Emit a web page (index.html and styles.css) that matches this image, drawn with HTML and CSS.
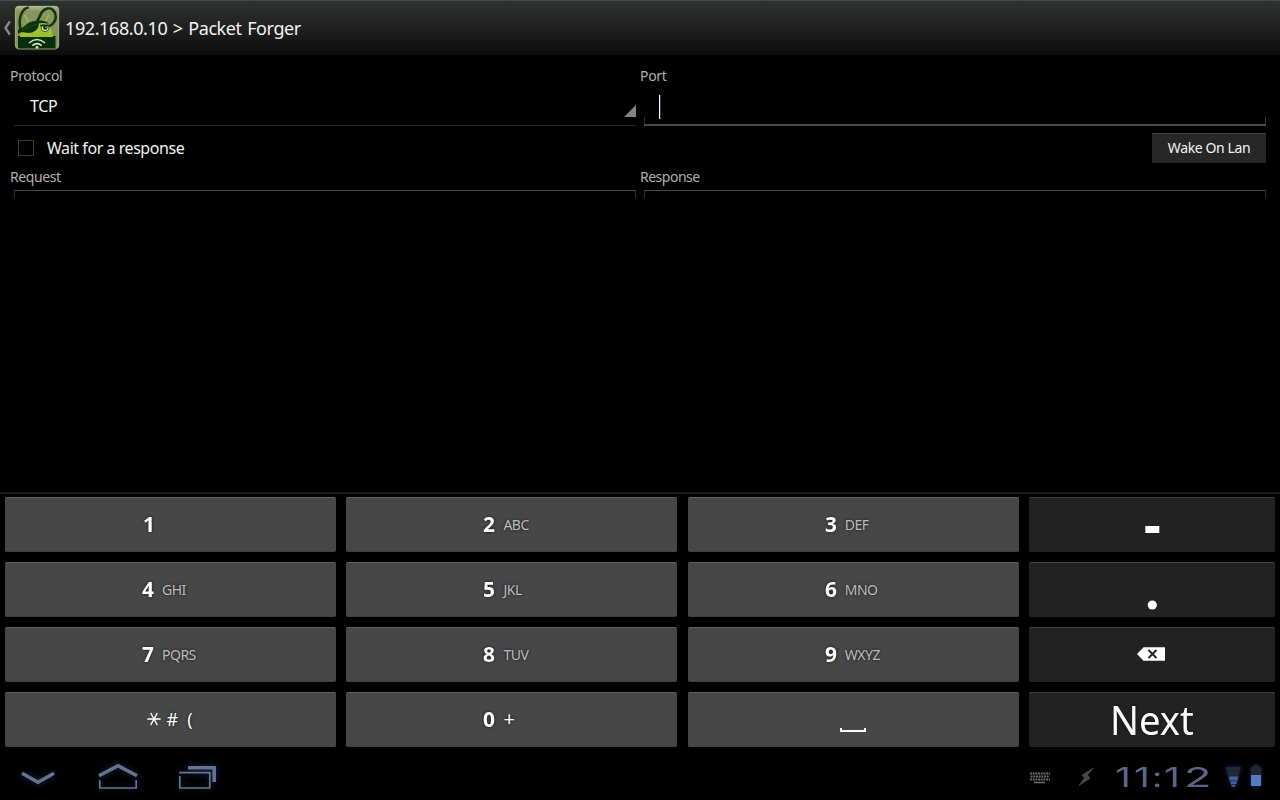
FILE: index.html
```html
<!DOCTYPE html>
<html lang="en">
<head>
<meta charset="utf-8">
<title>Packet Forger</title>
<link rel="stylesheet" href="styles.css">
</head>
<body>
<header class="bar">
  <svg class="back" width="8" height="14" viewBox="0 0 8 14"><path d="M6.800 .3 2.500 7l4.300 6.700" fill="none" stroke="#8b8b8b" stroke-width="2.400"/></svg>
  <svg class="logo" width="46" height="46" viewBox="0 0 46 46">
    <defs>
      <linearGradient id="lg" x1="0" y1="0" x2="0" y2="1"><stop offset="0" stop-color="#b7bf94"/><stop offset=".12" stop-color="#8a9662"/><stop offset="1" stop-color="#83905a"/></linearGradient>
      <linearGradient id="hd" x1="0" y1="0" x2="0" y2="1"><stop offset="0" stop-color="#a5cb35"/><stop offset="1" stop-color="#9bbf2c"/></linearGradient>
      <clipPath id="cl"><rect x="1" y="1" width="44" height="43" rx="4"/></clipPath>
    </defs>
    <rect x="1" y="1" width="44" height="43" rx="4" fill="url(#lg)"/>
    <g clip-path="url(#cl)">
      <path d="M4 31h37.500v14H4z" fill="#062f0c"/>
      <path d="M6 32C7 22 14 16.500 23 16.500S38 22 39 32z" fill="url(#hd)"/>
      <path d="m10.500 10 4 7M34.500 10l-3 7" stroke="#a4c639" stroke-width="1.300"/>
      <path d="M15 2C6 4 4 17 7 25" fill="none" stroke="#12350f" stroke-width="2.600"/>
      <path d="M4 24.500c6-1 8-7 16-8.500 5-1 10-.5 13 1l2 2c-3-1-7-1.500-10-.5 0 5-4 9.500-11 9.500-4 0-6-2-10 1z" fill="#0b330c"/>
      <path d="M8 25c5-1 9-5 16-6" fill="none" stroke="#2f4d20" stroke-width=".8"/>
      <path d="M23 16C25 14 26 10 28 7c3-4 8-5 11-2 4 4 3 9 1 12q-1.500 3-4.500 4" fill="none" stroke="#12350f" stroke-width="2.700"/>
      <circle cx="31" cy="22.800" r="3.900" fill="#d3e0a5" stroke="#3d6218" stroke-width="1"/>
      <circle cx="31.300" cy="22.500" r="2.200" fill="#0c300d"/><circle cx="32" cy="22" r=".8" fill="#dce4bd"/>
      <path d="M26 20.500l11 .3" stroke="#0c300d" stroke-width="1.600"/>
      <g fill="none" stroke="#dce4bd" stroke-width="1.600"><path d="M15 38q8-7 16 0M18.300 40.700q4.700-4 9.400 0"/></g>
      <circle cx="23" cy="42.400" r="1.400" fill="#dce4bd"/>
    </g>
    <rect x="1.500" y="1.500" width="43" height="42.500" rx="4" fill="none" stroke="#b3ba91" stroke-width="1.300" opacity=".55"/>
  </svg>
  <h1 class="title">192.168.0.10 &gt; Packet Forger</h1>
</header>
<main class="form">
  <div class="col">
    <div class="label l-protocol">Protocol</div>
    <div class="spinner"><span class="tcp">TCP</span><i class="tri"></i></div>
    <div class="row"><i class="box"></i><span class="wait">Wait for a response</span></div>
    <div class="label l-request">Request</div>
    <div class="area"></div>
  </div>
  <div class="col">
    <div class="label l-port">Port</div>
    <div class="input"><i class="caret"></i></div>
    <div class="row end"><button class="wol"><span>Wake On Lan</span></button></div>
    <div class="label l-response">Response</div>
    <div class="area"></div>
  </div>
</main>
<section class="keys">
  <div class="key"><b class="one">1</b></div>
  <div class="key"><b>2</b><span>ABC</span></div>
  <div class="key"><b>3</b><span>DEF</span></div>
  <div class="key dark"><svg width="16" height="55"><path d="M1.300 29h14v7h-14z" fill="#fff"/></svg></div>
  <div class="key"><b>4</b><span>GHI</span></div>
  <div class="key"><b>5</b><span>JKL</span></div>
  <div class="key"><b>6</b><span>MNO</span></div>
  <div class="key dark"><svg width="16" height="55"><circle cx="8.300" cy="43" r="4.600" fill="#fff"/></svg></div>
  <div class="key"><b>7</b><span>PQRS</span></div>
  <div class="key"><b>8</b><span>TUV</span></div>
  <div class="key"><b>9</b><span>WXYZ</span></div>
  <div class="key dark"><svg class="del" width="29" height="14" viewBox="0 0 29 14"><path d="M0 7 6.500.3H28v13.400H6.500z" fill="#fff"/><path d="m11.500 3 8 8m0-8-8 8" stroke="#222" stroke-width="1.900"/></svg></div>
  <div class="key sym"><svg class="star" width="14" height="14" viewBox="0 0 14 14"><path d="M.3 7h13.400M3.700 1l6.600 12M10.300 1 3.700 13" stroke="#fff" stroke-width="1.400"/></svg><span class="hash">#</span><span class="paren">(</span></div>
  <div class="key"><b>0</b><span class="plus">+</span></div>
  <div class="key"><svg class="space" width="27" height="5"><path d="M1 0v3h24V0" fill="none" stroke="#fff" stroke-width="2"/></svg></div>
  <div class="key dark"><span class="next">Next</span></div>
</section>
<footer class="nav">
  <svg class="glow" width="230" height="48" viewBox="0 752 230 48">
    <g fill="none" stroke="#68738f">
      <path d="M22 773.300 38 782.200l16-8.900" stroke-width="3.500"/>
      <path d="M99 775.800 118 765.800l19 10" stroke-width="3.500"/>
      <path d="M99.800 780v8h36.400v-8" stroke-width="1.700"/>
      <path d="M188 767.700h26.200V782" stroke-width="3.500"/>
      <path d="M179 772.700h30.800M179.800 776v12h30V772" stroke-width="1.700"/>
    </g>
  </svg>
  <div class="status">
    <svg class="kb" width="20" height="12" viewBox="0 0 20 12"><g stroke="#707070" stroke-width="2" stroke-dasharray="1.900 .8"><path d="M0 1.500h20M.6 4.500h19M0 7.500h20"/></g><path d="M4 10.500h11" stroke="#707070" stroke-width="1.500"/></svg>
    <svg class="usb" width="18" height="18" viewBox="0 0 18 18"><path d="M15.500 0 4 7l2.500 3L1 17.500 12 10.500 9.500 7z" fill="#484848" stroke="#484848" stroke-width=".7"/></svg>
    <div class="clock"><span class="one">1</span><span class="one">1</span><span class="colon">:</span><span class="one">1</span><span class="two">2</span></div>
    <svg class="meters" width="34" height="24" viewBox="1230 765 34 24">
      <path d="M1225.500 767h15.500l-1 3.500h-13.500zM1227 771.500h12.500l-1 4h-10.500z" fill="#252830"/>
      <path d="M1228.500 776.500h10l-1 4h-8zM1230 781.300h7.200l-1 2.700h-5.200zM1231 784.700h4.800l-.8 2h-3.200z" fill="#40619f"/>
      <path d="M1251 767h3v-2h4v2h3v8h-10z" fill="#252830"/><path d="M1251 775h10v11h-10z" fill="#557bc5"/>
    </svg>
  </div>
</footer>
</body>
</html>
```
FILE: styles.css
```css
* { box-sizing: border-box; }
body { margin: 0; width: 1280px; height: 800px; overflow: hidden; display: flex; flex-direction: column; background: #000; color: #f3f3f3; font-family: "Noto Sans", "Open Sans", sans-serif; }
svg { display: block; flex: none; overflow: visible; }
.bar { height: 55px; flex: none; display: flex; align-items: center; padding-left: 3px; border-top: 1px solid #4a4c4b; background: linear-gradient(#303231, #0d0d0d); }
.back { margin-right: 3px; }
.title { margin: 0 0 0 5px; font-size: 18px; line-height: 24px; font-weight: 400; white-space: nowrap; letter-spacing: -.4px; word-spacing: 1.200px; }
.form { flex: none; height: 437px; display: grid; grid-template-columns: 630px 630px; padding: 11px 10px 0; }
.label { height: 20px; line-height: 20px; font-size: 14px; color: #b0b0b0; letter-spacing: -.3px; }
.l-response { letter-spacing: -.5px; }
.l-request { letter-spacing: -.4px; }
.spinner { height: 40px; width: 622px; margin-left: 4px; border-bottom: 1px solid #2b2b2b; padding-left: 16px; display: flex; justify-content: space-between; font-size: 16px; line-height: 40px; letter-spacing: -.3px; }
.tri { width: 12px; height: 12px; margin-top: 19px; background: #858585; clip-path: polygon(100% 0, 100% 100%, 0 100%); }
.input { height: 40px; width: 622px; margin-left: 4px; padding: 9px 0 0 15px; background: linear-gradient(#4b4b4b, #4b4b4b) 0 38px / 100% 2px no-repeat, linear-gradient(#333, #333) 0 31px / 1px 8px no-repeat, linear-gradient(#333, #333) 100% 31px / 1px 8px no-repeat; }
.caret { display: block; width: 1px; height: 24px; background: #fff; box-shadow: 1px 0 #243a62; }
.row { height: 41px; padding-left: 8px; display: flex; align-items: center; padding-top: 3px; }
.box { width: 16px; height: 16px; border: 1px solid #393939; margin-right: 13px; }
.wait { font-size: 16px; line-height: 22px; letter-spacing: -.45px; }
.end { justify-content: flex-end; padding-right: 4px; }
.wol { width: 114px; height: 30px; padding: 0 0 2px; border: 0; border-top: 1px solid #444; background: #272727; color: #f3f3f3; font: 14px/27px "Noto Sans", sans-serif; letter-spacing: -.4px; white-space: nowrap; }
.area { width: 622px; height: 8px; margin: 3px 0 0 4px; border: 1px solid #333; border-top-color: #484848; border-bottom: 0; }
.keys { flex: none; width: 1280px; height: 260px; border-top: 2px solid #1d1d1d; padding: 3px 5px 5px; display: grid; grid-template-columns: 331px 331px 331px 246px; grid-auto-rows: 55px; column-gap: 10.400px; row-gap: 10px; }
.key { background: #474747; border-top: 1px solid #626262; border-bottom: 1px solid #404040; border-radius: 2px; display: flex; align-items: center; padding-left: 136.500px; text-shadow: 0 0 3px #111; }
.key b { font-size: 22px; line-height: 30px; width: 20.500px; color: #fff; margin-top: -4px; transform: scaleX(.95); transform-origin: 0 50%; }
.key b.one { margin-left: 1px; }
.key:nth-child(4n+3) b { margin-left: .7px; width: 19.800px; }
.key span { font-size: 14px; line-height: 20px; color: #bdbdbd; letter-spacing: -.5px; }
.key.dark { background: #222; border-top-color: #444; border-bottom-color: #252525; padding: 0; justify-content: center; }
.key.sym { padding-left: 141.500px; }
.star { margin-top: -1px; }
.key span.hash { color: #fff; font-size: 18px; margin: -2px 0 0 6px; letter-spacing: 0; }
.key span.paren { color: #fff; font-size: 18px; margin: -2px 0 0 9px; letter-spacing: 0; }
.key span.plus { color: #fff; font-size: 20px; margin-top: -2px; }
.space { margin: 21px 0 0 16px; }
.del { margin: -1px 2px 0 0; }
.key span.next { font-size: 40px; line-height: 50px; color: #fff; letter-spacing: 0; transform: scaleX(.955); }
.nav { height: 48px; flex: none; display: flex; justify-content: space-between; }
.glow { filter: drop-shadow(0 0 3px #193259); }
.status { width: 250px; display: flex; align-items: flex-start; }
.kb { margin-top: 20px; }
.usb { margin: 16px 0 0 28px; }
.clock { width: 96px; margin: 9px 0 0 19px; color: #5b6785; font: 400 27.500px/32px Inter, sans-serif; display: grid; grid-template-columns: 19px 18px 12px 20px 27px; }
.clock span { transform-origin: 0 50%; justify-self: start; white-space: nowrap; }
.clock .one { transform: scaleX(1.420); }
.clock .colon { transform: scaleX(1.300); }
.clock .two { transform: scaleX(1.640); }
.meters { margin: 13px 0 0 19px; filter: drop-shadow(0 0 2px #183461); }
```
